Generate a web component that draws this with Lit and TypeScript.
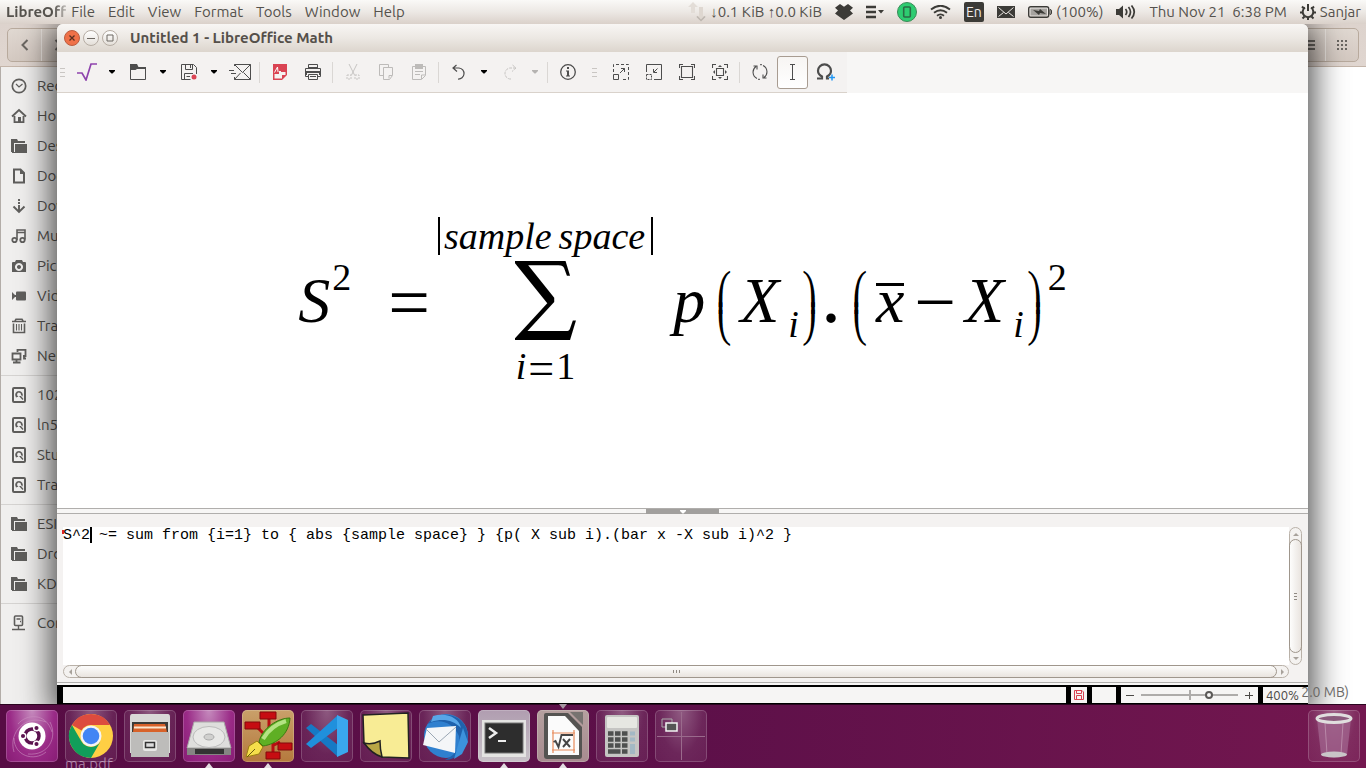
import { LitElement, html, css, svg, nothing, TemplateResult } from "lit";
import { customElement, property } from "lit/decorators.js";

type Art = { w: number; h: number; body: unknown };

const dark = "#3c3b37";
const disk = svg`<path fill="none" stroke="#5f5e5c" stroke-width="2" d="M3 1h10a1 1 0 0 1 1 1v12a1 1 0 0 1-1 1h-10a1 1 0 0 1-1-1v-12a1 1 0 0 1 1-1z"/><path fill="#5f5e5c" d="M8 4a4 4 0 0 0-3 6.500l2.500-1A2 2 0 1 1 10 8l1.500 1.500A4 4 0 0 0 8 4zM8 9h2l2.500 3-1 1z"/>`;
const folder = svg`<path fill="#5f5e5c" d="M0 1h6l1 2h7v2H3v9H0z"/><path fill="#5f5e5c" d="M4 6h12v9H1v-1h3z"/>`;

const ICONS: Record<string, Art> = {
  /* places */
  clock: { w: 16, h: 16, body: svg`<circle cx="8" cy="8" r="6.700" fill="none" stroke="#5f5e5c" stroke-width="1.700"/><path d="M5 6l3 3 3.500-3" fill="none" stroke="#5f5e5c" stroke-width="1.200"/>` },
  home: { w: 16, h: 16, body: svg`<path d="M1 8.500L8 2l7 6.500M3.500 8v6.200h9V8" fill="none" stroke="#5f5e5c" stroke-width="1.800"/><path fill="#5f5e5c" d="M7 9h3v5H7z"/>` },
  folder: { w: 16, h: 16, body: folder },
  doc: { w: 16, h: 16, body: svg`<path d="M3 1.500h6.500L13 5v9.500H3z" fill="none" stroke="#5f5e5c" stroke-width="2"/><path fill="#5f5e5c" d="M9 1v5h5z"/>` },
  down: { w: 16, h: 16, body: svg`<path d="M8 1v2M8 4v2M8 7v6M2.500 8.500L8 14l5.500-5.500" fill="none" stroke="#5f5e5c" stroke-width="1.900"/>` },
  music: { w: 16, h: 16, body: svg`<path d="M6 12V2h8v9.500M6 4.500h8" fill="none" stroke="#5f5e5c" stroke-width="1.600"/><circle cx="3.500" cy="12" r="2.200" fill="none" stroke="#5f5e5c" stroke-width="1.800"/><circle cx="11.500" cy="12" r="2.200" fill="none" stroke="#5f5e5c" stroke-width="1.800"/>` },
  camera: { w: 16, h: 16, body: svg`<path fill="#5f5e5c" fill-rule="evenodd" d="M1 5q0-1 1-1h2l1-2h6l1 2h2q1 0 1 1v9H1zM8 5a4 4 0 1 0 .01 0zM8 7a2 2 0 1 1-.01 0z"/>` },
  video: { w: 16, h: 16, body: svg`<rect x="5" y="3.500" width="10" height="9" rx="1" fill="#5f5e5c"/><path fill="#5f5e5c" d="M1 4l3 3h1v2H4l-3 3z"/>` },
  trash: { w: 16, h: 16, body: svg`<path d="M1 3.500h14M4 3l1-1.800h6L12 3M2.500 5.500v9h11v-9" fill="none" stroke="#5f5e5c" stroke-width="1.600"/><path d="M5.500 6v6.500M8 6v6.500M10.500 6v6.500" stroke="#5f5e5c" stroke-width="1.100"/>` },
  network: { w: 16, h: 16, body: svg`<path d="M6.500 4V1.800h8V8H12M13 8v2.500h2M1.500 5.500h8v6h-8zM5.500 12v3M2 14.500h7.500" fill="none" stroke="#5f5e5c" stroke-width="1.800"/>` },
  disk: { w: 16, h: 16, body: disk },
  server: { w: 16, h: 16, body: svg`<rect x="3.500" y="1" width="8" height="9.500" rx="1" fill="none" stroke="#5f5e5c" stroke-width="1.600"/><path d="M5.500 4h4M7.500 11v3M1 14.500h13M9 6.500h1" stroke="#5f5e5c" stroke-width="1.400"/>` },
  back: { w: 8, h: 14, body: svg`<path d="M6.500 2L1.500 7l5 5" fill="none" stroke="#6b6762" stroke-width="2"/>` },
  next: { w: 8, h: 14, body: svg`<path d="M1.500 2l5 5-5 5" fill="none" stroke="#6b6762" stroke-width="2"/>` },
  list: { w: 12, h: 12, body: svg`<path d="M0 2h12M0 6h12M0 10h12" stroke="#6b6762" stroke-width="2"/>` },
  grid: { w: 12, h: 12, body: svg`<path d="M1 2h10M1 6h10M1 10h10" stroke="#6b6762" stroke-width="2" stroke-dasharray="2"/>` },
  /* indicators */
  updown: { w: 18, h: 20, body: svg`<path d="M5 0l5 5H7v6H3V5H0z" fill="#e3ddd7"/><path d="M11 5h4v9h3l-5 5-5-5h3z" fill="#ded7d0"/><path d="M9 14.500l4 4 4-4" fill="none" stroke="#bdb7b0" stroke-width="1.500"/>` },
  dropbox: { w: 18, h: 16, body: svg`<path fill="${dark}" d="M5 0l4 2.700L13 0l5 3.700-3 2.800 3 3-3 2.200-6 4.300-6-4.300L0 9.500l3-3L0 3.700z"/>` },
  bars: { w: 18, h: 14, body: svg`<path d="M0 2h10M0 7h10M0 12h10" stroke="${dark}" stroke-width="2.600"/><path fill="${dark}" d="M12 5h6l-3 3.500z"/>` },
  phone: { w: 20, h: 20, body: svg`<circle cx="10" cy="10" r="9.500" fill="#2ecc71" stroke="#3a8b58"/><rect x="6.700" y="5" width="6.600" height="10" rx="1" fill="none" stroke="#2b6a45" stroke-width="1.600"/>` },
  wifi: { w: 21, h: 14, body: svg`<path d="M1 4.500q9.500-7.500 19 0M4 7.700q6.500-5 13 0M7 10.700q3.500-2.600 7 0" fill="none" stroke="${dark}" stroke-width="1.900"/><circle cx="10.500" cy="12.500" r="1.500" fill="${dark}"/>` },
  envelope: { w: 18, h: 12, body: svg`<rect width="18" height="12" fill="${dark}"/><path d="M1.500 1.500L9 8l7.500-6.500M1.500 10.500l5-4M16.500 10.500l-5-4" fill="none" stroke="#eeeae6"/>` },
  battery: { w: 24, h: 12, body: svg`<rect x=".7" y=".7" width="20" height="10.600" rx="2" fill="none" stroke="${dark}" stroke-width="1.400"/><rect x="2.500" y="2.500" width="16.500" height="7" fill="#a6a39f"/><path d="M22 3.500q1.500 0 1.500 1.500v2q0 1.500-1.500 1.500z" fill="none" stroke="${dark}"/><path fill="${dark}" d="M5 4l6 1 1-2 6 5-6-1-1 2z"/>` },
  volume: { w: 20, h: 14, body: svg`<path fill="${dark}" d="M0 4h3l4-3.500v13L3 10H0z"/><path d="M9.500 4q2.500 3 0 6M12.500 2q4 5 0 10M15.500.5q5.500 6.500 0 13" fill="none" stroke="${dark}" stroke-width="1.700"/>` },
  gear: { w: 16, h: 16, body: svg`<path d="M5 3.500a5.300 5.300 0 1 0 6 0" fill="none" stroke="${dark}" stroke-width="2"/><path d="M8 0v7M0 8.500h3M13 8.500h3M2 2.500l2 2M14 2.500l-2 2M2.500 14.500l2-2M13.500 14.500l-2-2M8 13v3" stroke="${dark}" stroke-width="2"/>` },
  /* toolbar */
  sqrt: { w: 20, h: 18, body: svg`<path d="M0 10h5l4 7L14 1h6" fill="none" stroke="#8e44ad" stroke-width="1.700"/>` },
  open: { w: 16, h: 16, body: svg`<path d="M.5 4v11.500h15V4z" fill="none" stroke="#4d4d4d"/><path fill="#4d4d4d" d="M0 0h7l1.500 3H16v2H7L5.500 6H0z"/>` },
  save: { w: 16, h: 16, body: svg`<path d="M9.500 15.500h-9V.5h12l3 3V10M4.500.5v5h7v-5M3.500 15V9.500H12M5.500 12.500H9" fill="none" stroke="#4d4d4d"/><path d="M9.500 1v3" stroke="#4d4d4d"/><circle cx="13" cy="13" r="2.500" fill="#da4453"/>` },
  mail: { w: 22, h: 16, body: svg`<path d="M5.500 2V.5h16v15h-16V13M5.500.5l8 8 8-8M21.500 15.500l-7-7M5.500 15.500l6-6.500M0 6.500h5M2 9.500h5" fill="none" stroke="#4d4d4d"/>` },
  pdf: { w: 14, h: 16, body: svg`<path d="M0 0h14v11l-5 5H0z" fill="#da4453"/><path d="M6 7h2v1h4.500v3H9v3.500H1.500V10H6z" fill="#f4f2f1"/><path d="M1.500 8.500l3-5.500.5 5" fill="none" stroke="#fff"/>` },
  print: { w: 16, h: 16, body: svg`<path d="M3.500 4V.5h9V4M3.500 12.500h-3v-8h15v8h-3M3.500 10.500h9v5h-9z" fill="none" stroke="#4d4d4d"/><path fill="#4d4d4d" d="M1 7h14v4h-1V9H2v2H1zM3 3h10v1H3zM5 12h6v1H5z"/>` },
  cut: { w: 14, h: 16, body: svg`<path d="M3 0l5.500 11M11 0L5.500 11" fill="none" stroke="#c6c4c2"/><path d="M1 11h4v4H1zM9 11h4v4H9z" fill="none" stroke="#c6c4c2" stroke-dasharray="2 1"/>` },
  copy: { w: 14, h: 16, body: svg`<path d="M4 11.500H.5V.5h9V3M4.500 3.500h9v8l-3 4h-6zM13 11.500h-3v3" fill="none" stroke="#bdbbb9"/>` },
  paste: { w: 14, h: 16, body: svg`<path d="M.5 2.500h13v9l-4 4h-9zM9.500 15v-4H13" fill="none" stroke="#bdbbb9"/><path fill="#bdbbb9" d="M3 0h8v5H3zM3 7h8v1H3zM3 10h5v1H3z"/>` },
  undo: { w: 14, h: 16, body: svg`<path d="M4.500 1L1 4l4 3.500M1 4h6a5.500 5.500 0 1 1-1 11" fill="none" stroke="#4d4d4d" stroke-width="1.200"/>` },
  redo: { w: 14, h: 16, body: svg`<path d="M9.500 1L13 4 9 7.500M13 4H7a5.500 5.500 0 1 0 1 11" fill="none" stroke="#c6c4c2" stroke-dasharray="3 1"/>` },
  info: { w: 16, h: 16, body: svg`<circle cx="8" cy="8" r="7.300" fill="none" stroke="#4d4d4d" stroke-width="1.300"/><path fill="#4d4d4d" d="M7 3h2v2H7zM6 6.500h3v5h1v1H6v-1h1v-4H6z"/>` },
  zoomin: { w: 16, h: 16, body: svg`<path d="M.5 8V.5h15v15H8" fill="none" stroke="#4d4d4d" stroke-dasharray="3 2"/><path d="M.5 10.500h5v5h-5zM7 9l4.500-4.500M8 4.500h3.500V8" fill="none" stroke="#4d4d4d"/>` },
  zoomout: { w: 16, h: 16, body: svg`<path d="M.5 8V.5h15v15H8M11.500 4.500L8 8M7.500 5v3.500H11" fill="none" stroke="#4d4d4d"/><path d="M.5 10.500h5v5h-5z" fill="none" stroke="#4d4d4d" stroke-dasharray="2 1"/>` },
  zoom100: { w: 16, h: 16, body: svg`<path d="M2.500 2.500h11v11h-11zM.5 4V.5H4M12 .5h3.500V4M15.500 12v3.500H12M4 15.500H.5V12" fill="none" stroke="#4d4d4d" stroke-width="1.100"/>` },
  zoomfit: { w: 16, h: 16, body: svg`<path d="M4.500 4.500h7v7h-7zM.5 4V.5H4M12 .5h3.500V4M15.500 12v3.500H12M4 15.500H.5V12" fill="none" stroke="#4d4d4d" stroke-width="1.100"/><path fill="#4d4d4d" d="M6 3l2-2 2 2zM6 13l2 2 2-2zM3 6L1 8l2 2zM13 6l2 2-2 2z"/>` },
  refresh: { w: 16, h: 16, body: svg`<path d="M5 14.500A7 7 0 0 1 4 2.500M11 1.500a7 7 0 0 1 1 12M1.500 2H5v3.500M14.500 14H11v-3.500" fill="none" stroke="#4d4d4d" stroke-width="1.100"/><path d="M8 .7h2M6 15.300h2" stroke="#4d4d4d"/>` },
  ibeam: { w: 16, h: 16, body: svg`<path d="M5 .5h5M5 15.500h5M7.500.5v15" stroke="#4d4d4d"/>` },
  omega: { w: 20, h: 18, body: svg`<path d="M1 15.500h5v-2C3 12 2 10 2 7.800a6 6 0 0 1 13 0c0 2.200-1 4.200-4 5.700v2h2" fill="none" stroke="#4d4d4d" stroke-width="2.200"/><path d="M13 14.500h6M16 11.500v6" stroke="#2196f3" stroke-width="1.500"/>` },
  caret: { w: 6, h: 4, body: svg`<path d="M0 0h6v1L3.500 3.500h-1L0 1z" fill="currentColor"/>` },
  redsave: { w: 10, h: 10, body: svg`<path d="M.5.5h7.500l1.500 1.500v7.500h-9zM2.500.5v3h5v-3M2.500 9.500v-4h5v4" fill="none" stroke="#da4453"/>` },
  /* launcher */
  ubuntu: { w: 52, h: 52, body: svg`<path d="M8 42C2 22 20 4 40 12M44 12c8 16-2 34-22 32M12 14C20 4 40 2 46 22M40 42C28 52 8 46 8 28" fill="none" stroke="#c98fc0" opacity=".6"/><circle cx="26" cy="26" r="13.500" fill="#fff"/><circle cx="26" cy="26" r="7" fill="none" stroke="#5c1450" stroke-width="3.500"/><g fill="#5c1450" stroke="#fff" stroke-width="1.500"><circle cx="17" cy="26" r="2.800"/><circle cx="30.500" cy="18" r="2.800"/><circle cx="30.500" cy="34" r="2.800"/></g>` },
  chrome: { w: 52, h: 52, body: svg`<circle cx="26" cy="26" r="22" fill="#ffcf44"/><path d="M6.900 15A22 22 0 0 1 45.100 15H26a11 11 0 0 0-9.500 5.500z" fill="#dd4b3e"/><path d="M6.900 15A22 22 0 0 0 26 48l9.500-16.500a11 11 0 0 1-19 0z" fill="#119e5a"/><circle cx="26" cy="26" r="10.500" fill="#f4f4f4"/><circle cx="26" cy="26" r="8.300" fill="#4285f4"/>` },
  files: { w: 52, h: 52, body: svg`<path d="M6 7q0-3 2-3h36q2 0 2 3v36H6z" fill="#d9d9d7"/><path d="M8 12h36v11H8z" fill="#3c3b37"/><path d="M10 14h31l2 8H9z" fill="#d8622a"/><path d="M10 16.500h32v2H10z" fill="#fbe6cf"/><path d="M7 22h38v25H7z" fill="#bdbcba"/><rect x="19" y="30" width="14" height="11" rx="2" fill="#e8e8e6"/><rect x="21.500" y="32.500" width="9" height="5" fill="#ddd" stroke="#333" stroke-width="1.500"/>` },
  drive: { w: 52, h: 52, body: svg`<path d="M11 12h30l7 26H4z" fill="#dededc" stroke="#a9a9a7"/><ellipse cx="26" cy="27" rx="16" ry="10.500" fill="#e8e8e6" stroke="#bbb"/><ellipse cx="26" cy="27" rx="5" ry="3" fill="#d0d0ce" stroke="#aaa"/><path d="M4 38h44v7H4z" fill="#858583"/><path d="M12 39h29v5H12z" fill="#333"/>` },
  pen: { w: 52, h: 52, body: svg`<path d="M16 18l8 8M27 8v12M38 32l-8 4M31 44V32" stroke="#b80d12" stroke-width="3"/><g fill="#c60d12" stroke="#830a0c"><path d="M3 12h15v7H3zM18 2h16v7H18zM36 33h14v7H36zM24 42h14v7H24z"/></g><path d="M48 8C36 8 20 18 17 32l4 4c14-2 26-12 27-28z" fill="#5faf24" stroke="#3a7a11"/><path d="M44 11C34 14 26 20 21 29" stroke="#b4e383" stroke-width="4" fill="none"/><path d="M15 31l6 6-4 7-13 3 3-11z" fill="#f6df4b" stroke="#9b7f12"/><path d="M5 47l8-8" stroke="#6b5a10"/>` },
  vscode: { w: 52, h: 52, body: svg`<path d="M5 18l5-4 27 21v12z" fill="#1679c4"/><path d="M5 34l5 4 27-20V5z" fill="#2090dc"/><path d="M36 5l11 5v32l-11 5z" fill="#3aa7ee"/>` },
  note: { w: 52, h: 52, body: svg`<path d="M3 5l45-2 1 45-27-1-18-14z" fill="#f8ec95" stroke="#222" stroke-width="1.500"/><path d="M4 33q8 2 16-2 0 8 2 16Q12 44 4 33z" fill="#b9a645" stroke="#222" stroke-width="1.500"/>` },
  bird: { w: 52, h: 52, body: svg`<circle cx="27" cy="26" r="22" fill="#2f80cf"/><path d="M9 14C18 0 42 2 48 20c4 18-10 30-22 30 12-6 16-14 14-24C34 12 20 8 9 14z" fill="#1f62ad"/><path d="M14 6c14-4 26 2 28 12-8-8-18-10-30-6z" fill="#58a6e8"/><path d="M8 18l29-2-1 27-32-8z" fill="#f4f6f8"/><path d="M7 19l13 13 17-15" fill="none" stroke="#9aa7b4"/><path d="M44 18l5 14-6 12-8 5z" fill="#3c92dc"/>` },
  terminal: { w: 52, h: 52, body: svg`<rect x="4" y="10" width="44" height="37" fill="#e4e4e2"/><rect x="7" y="13" width="38" height="30" fill="#2d2d2d" stroke="#777"/><path d="M11 18l7 5-7 5" fill="none" stroke="#eee" stroke-width="2.500"/><path d="M20 31h8" stroke="#eee" stroke-width="2"/>` },
  math: { w: 52, h: 52, body: svg`<path d="M9 3h22l14 14v29q0 3-3 3H10q-3 0-3-3V5q0-2 2-2z" fill="#555452"/><path d="M11 6h17l14 15v24H11z" fill="#fbfbfb"/><path d="M33 2h13v13z" fill="#777370"/><path d="M15 23h23M15 40h23M16 20v23M37 20v23" stroke="#e88a5a" stroke-width="1.200"/><path d="M16.500 32l2-1 3 6 3-12H36M26 29l7 8M33 29l-7 8" fill="none" stroke="#444" stroke-width="1.900"/>` },
  calc: { w: 52, h: 52, body: svg`<rect x="9" y="5" width="34" height="42" rx="2" fill="#c5c5c3"/><rect x="11" y="7" width="30" height="11" rx="1" fill="#e6e7e2"/><path d="M12 23.500h21M12 29.500h21M12 35.500h21" stroke="#4e504f" stroke-width="4.500" stroke-dasharray="5.500 1.500"/><path d="M12 41.500h12.500M26 41.500h5.500" stroke="#4e504f" stroke-width="4.500"/><path d="M34 21.500h5v4h-5zM34 27.500h5v4h-5zM34 34h5v10h-5z" fill="#a3b8c4"/>` },
  desks: { w: 52, h: 52, body: svg`<path d="M26.500 2v48M2 26.500h48" stroke="#9a6a8c"/><path d="M7 9h10v8H7z" fill="none" stroke="#aaa"/><path d="M11 13h11v8H11z" fill="#555" stroke="#f4f4f4" stroke-width="1.500"/>` },
  bin: { w: 52, h: 52, body: svg`<path d="M9 9h34l-4 36q-13 5-26 0z" fill="#a2668f" opacity=".75"/><path d="M17 13l2 31M35 13l-2 31" stroke="#b988a8"/><ellipse cx="26" cy="44.500" rx="13" ry="3" fill="#c9c5c8"/><ellipse cx="26" cy="8.500" rx="17" ry="4" fill="#8b5a7c" stroke="#e0dede" stroke-width="3"/>` },
};

const icon = (name: string): TemplateResult => {
  const a = ICONS[name];
  return html`<svg width=${a.w} height=${a.h} viewBox="0 0 ${a.w} ${a.h}" aria-hidden="true">${a.body}</svg>`;
};

const base = css`
  * { box-sizing: border-box; }
  button { font: inherit; color: inherit; background: none; border: 0; padding: 0; margin: 0; }
  svg { display: block; flex: none; }
`;

@customElement("top-panel")
class TopPanel extends LitElement {
  static styles = [base, css`
    :host { display: flex; align-items: center; justify-content: space-between; height: 24px; padding: 0 5px 0 6px;
      background: linear-gradient(#faf9f7, #ece8e4 50%, #dad1ca); color: #55524d; white-space: nowrap; }
    .menus, .tray { display: flex; align-items: center; gap: 13px; }
    .app { margin-right: -8px; font-weight: 700; mask-image: linear-gradient(90deg, #000 80%, #0004); }
    .net, .group { display: flex; align-items: center; gap: 4px; }
    .lang { width: 20px; height: 20px; border-radius: 2px; background: #3c3b37; color: #f2efec; line-height: 20px; text-align: center; font-size: 14px; }
  `];
  render() {
    return html`
      <nav class="menus">
        <span class="app">LibreOff</span>
        ${["File", "Edit", "View", "Format", "Tools", "Window", "Help"].map((m) => html`<button>${m}</button>`)}
      </nav>
      <div class="tray">
        <span class="net">${icon("updown")}<span>↓0.1 KiB ↑0.0 KiB</span></span>
        ${["dropbox", "bars", "phone", "wifi"].map(icon)}
        <span class="lang">En</span>
        ${icon("envelope")}
        <span class="group">${icon("battery")}<span>(100%)</span></span>
        ${icon("volume")}
        <span>Thu Nov 21&nbsp; 6:38 PM</span>
        <span class="group">${icon("gear")}<span>Sanjar</span></span>
      </div>`;
  }
}

const PLACES: [string, string][][] = [
  [["clock", "Recent"], ["home", "Home"], ["folder", "Desktop"], ["doc", "Documents"], ["down", "Downloads"],
   ["music", "Music"], ["camera", "Pictures"], ["video", "Videos"], ["trash", "Trash"], ["network", "Network"]],
  [["disk", "102 GB Volume"], ["disk", "ln5"], ["disk", "Studies"], ["disk", "Travel"]],
  [["folder", "ESI"], ["folder", "Dropbox"], ["folder", "KDE"]],
  [["server", "Connect to Server"]],
];

@customElement("file-manager")
class FileManager extends LitElement {
  static styles = [base, css`
    :host { display: flex; flex-direction: column; height: 100%; background: #fff; color: #55524d; }
    .bar { display: flex; justify-content: space-between; align-items: flex-start; height: 43px; padding: 4px 7px;
      background: linear-gradient(#ddd3cd, #e0d6d0); border-bottom: 1px solid #c4b5a9; }
    .pair { display: flex; height: 34px; border: 1px solid #b8aa9d; border-radius: 5px; background: linear-gradient(#e0d8d1, #d4c9c1); }
    .pair button { display: grid; place-items: center; width: 33px; }
    .pair button + button { border-left: 1px solid #efe9e4; }
    .side { flex: 1; width: 180px; padding-top: 4px; background: #f0efee; border-left: 1px solid #b3ada8; }
    .place { display: flex; align-items: center; gap: 10px; height: 30px; padding-left: 10px; white-space: nowrap; color: inherit; text-decoration: none; }
    .group + .group { margin-top: 4px; padding-top: 4px; border-top: 1px solid #d5d3d1; }
  `];
  render() {
    return html`
      <div class="bar">
        <div class="pair"><button aria-label="Back">${icon("back")}</button><button aria-label="Forward">${icon("next")}</button></div>
        <div class="pair"><button aria-label="List view">${icon("list")}</button><button aria-label="Icon view">${icon("grid")}</button></div>
      </div>
      <nav class="side">
        ${PLACES.map((g) => html`<div class="group">${g.map(([i, t]) => html`<a class="place" href="#">${icon(i)}<span>${t}</span></a>`)}</div>`)}
      </nav>`;
  }
}

/* Toolbar entries: "|" separator, ":" handle, trailing "+" drop-down, leading "-" disabled, leading "*" pressed. */
const TOOLS = ":,sqrt+,open+,save+,mail,|,pdf,print,|,-cut,-copy,-paste,|,undo+,-redo+,|,info,:,zoomin,zoomout,zoom100,zoomfit,|,refresh,*ibeam,omega".split(",");

@customElement("math-toolbar")
class MathToolbar extends LitElement {
  static styles = [base, css`
    :host { display: flex; height: 41px; }
    .bar { display: flex; align-items: center; padding-right: 5px; background: #f4f2f1; border-bottom: 1px solid #d9d2cb; }
    .tool { display: grid; place-items: center; width: 33px; height: 33px; }
    .tool.on { width: 31px; margin: 0 1px; border: 1px solid #a89c91; border-radius: 3px; background: linear-gradient(#f7f5f3, #fff); }
    .drop { display: grid; place-items: center; width: 18px; height: 33px; color: #000; }
    .drop:disabled { color: #b5b3b1; }
    .sep { width: 1px; height: 21px; margin: 0 3px; background: #dad7d4; }
    .grip { width: 5px; height: 9px; margin: 0 7px 0 8px; background: repeating-linear-gradient(#c9c6c3 0 1px, transparent 1px 4px); }
    .grip:first-child { margin: 0 5px 0 3px; }
  `];
  render() {
    return html`<div class="bar">${TOOLS.map((t) => {
      if (t === "|") return html`<span class="sep"></span>`;
      if (t === ":") return html`<span class="grip"></span>`;
      const off = t[0] === "-";
      const name = t.replace(/[-+*]/g, "");
      return html`<button class="tool ${t[0] === "*" ? "on" : ""}" aria-label=${name} ?disabled=${off}>${icon(name)}</button>
        ${t.endsWith("+") ? html`<button class="drop" aria-label="${name} options" ?disabled=${off}>${icon("caret")}</button>` : nothing}`;
    })}</div>`;
  }
}

const fence = (mark: string, kind = "open") =>
  html`<math class="fence ${kind}"><mrow><mo stretchy="true" symmetric="false" lspace="0px" rspace="0px" minsize="60px">${mark}</mo><mspace width="0px" height="52px" depth="14px"></mspace></mrow></math>`;

@customElement("math-formula")
class MathFormula extends LitElement {
  static styles = css`
    :host { display: block; font: 64px/71px "Liberation Serif", serif; color: #000; white-space: nowrap; }
    span { display: inline-block; }
    .it { font-style: italic; }
    .sm { font-size: 38px; line-height: 42px; }
    .sup { vertical-align: 32px; margin-left: 2px; }
    .sub { vertical-align: -15px; margin-left: 9px; }
    .op { font-size: 74px; vertical-align: -5px; }
    .rel { margin: 0 8px 0 37px; }
    .sum { display: inline-flex; flex-direction: column; align-items: center; vertical-align: 73px; margin-right: 20px; }
    .abs { display: flex; gap: 7px; padding: 0 6px 0 4px; border: solid #000; border-width: 0 2px; line-height: 38px; }
    .sigma { font-family: "DejaVu Math TeX Gyre", "Liberation Serif", serif; font-size: 75px; line-height: 90px; }
    .low { height: 42px; }
    .low .op { font-size: 46px; line-height: 42px; margin: 0 2px; }
    .fence { font-family: "DejaVu Math TeX Gyre", "Liberation Serif", serif; font-size: 28px; }
    .open { margin: 0 11px 0 7px; }
    .close { margin: 0 4px 0 1px; }
    .dot { font-size: 80px; }
    .bar { border-top: 3px solid #000; line-height: 29px; }
    .minus { margin: 0 9px 0 10px; }
  `;
  render() {
    return html`<span class="it">S</span><span class="sm sup">2</span><span class="op rel">=</span><span class="sum"><span class="abs sm it"><span>sample</span><span>space</span></span><span class="sigma">∑</span><span class="low sm"><span class="it">i</span><span class="op">=</span><span>1</span></span></span><span class="it">p</span>${fence("(")}<span class="it">X</span><span class="sm sub it">i</span>${fence(")", "close")}<span class="dot">.</span>${fence("(")}<span class="it bar">x</span><span class="op minus">−</span><span class="it">X</span><span class="sm sub it">i</span>${fence(")", "close")}<span class="sm sup">2</span>`;
  }
}

@customElement("math-window")
class MathWindow extends LitElement {
  static styles = [base, css`
    :host { display: flex; flex-direction: column; background: #f7f6f5; border-radius: 6px 6px 0 0; color: #4c4a47; overflow: hidden; }
    .title { display: flex; align-items: center; gap: 3px; height: 28px; padding: 0 7px; background: linear-gradient(#f8f6f4, #ece8e3 50%, #dcd5cd); }
    .title h1 { margin: 0 0 0 9px; font-size: 15px; font-weight: 700; color: #55504a; }
    .ctl { display: grid; place-items: center; width: 16px; height: 16px; border: 1px solid #b5aca3; border-radius: 50%; background: linear-gradient(#fff, #e4dfd9); }
    .close { background: #ef7148; border-color: #bb5c3f; }
    .canvas { flex: 1; min-height: 0; display: grid; place-items: center; padding-top: 2px; background: #fff; }
    .split { display: flex; justify-content: center; height: 6px; border: solid #b0aeac; border-width: 1px 0; background: #f7f6f5; }
    .grab { display: grid; place-items: center; width: 73px; height: 6px; background: #a19f9d; color: #fff; }
    .editor { display: grid; grid-template-columns: 1fr 13px; grid-template-rows: 138px 13px; padding: 13px 6px 4px; background: #f4f2f1; border-bottom: 1px solid #b0aeac; }
    .field { position: relative; display: flex; background: #fff; }
    .code { flex: 1; display: block; padding: 0; margin: 0; border: 0; outline: 0; resize: none; overflow: hidden; background: none; color: #000; font: 15px/17px "Liberation Mono", monospace; }
    .cursor { position: absolute; left: 27px; top: 0; width: 2px; height: 16px; background: #000; }
    .mark { position: absolute; left: -1px; top: 3px; width: 2px; height: 4px; background: #d22; }
    .scroll { display: flex; align-items: center; border: 1px solid #b9b1a8; border-radius: 7px; background: #f4f2f0; }
    .scroll.v { flex-direction: column; }
    .thumb { flex: 1; display: grid; place-items: center; border: 1px solid #9f968c; border-radius: 7px; }
    .v .thumb { width: 13px; background: linear-gradient(90deg, #fdfdfc, #e9e4df); }
    .h .thumb { height: 13px; background: linear-gradient(#fdfdfc, #e9e4df); }
    .ridge { width: 3px; height: 7px; background: repeating-linear-gradient(#8f8982 0 1px, transparent 1px 3px); }
    .h .ridge { width: 7px; height: 3px; background: repeating-linear-gradient(90deg, #8f8982 0 1px, transparent 1px 3px); }
    .arrow { display: grid; place-items: center; width: 11px; height: 11px; color: #a8a29b; }
    .status { display: flex; gap: 5px; height: 19px; padding: 2px 0 1px 6px; margin-top: 2px; background: #000; }
    .cell { display: flex; align-items: center; justify-content: center; background: #f6f5f4; }
    .cell.doc { flex: 1; border-right: 0; }
    .cell.sig { width: 16px; }
    .cell.mod { width: 24px; }
    .cell.zoom { width: 137px; gap: 7px; }
    .cell.pct { width: 45px; padding-right: 6px; font-size: 13px; }
    .slider { appearance: none; width: 97px; height: 13px; margin: 0; background: linear-gradient(#aeacaa, #aeacaa) center / 100% 2px no-repeat, linear-gradient(#aeacaa, #aeacaa) center / 2px 10px no-repeat; }
    .slider::-webkit-slider-thumb { appearance: none; width: 8px; height: 8px; border: 2px solid #5b5957; border-radius: 50%; background: #f6f5f4; }
  `];
  arrow(d: string) {
    return html`<button class="arrow" aria-label="Scroll"><svg width="6" height="6" viewBox="0 0 6 6"><path d=${d} fill="currentColor" /></svg></button>`;
  }
  render() {
    return html`
      <header class="title">
        <button class="ctl close" aria-label="Close"><svg width="8" height="8" viewBox="0 0 8 8"><path d="M1.500 1.500l5 5M6.500 1.500l-5 5" stroke="#5a2f20" stroke-width="1.300" /></svg></button>
        <button class="ctl" aria-label="Minimize"><svg width="8" height="8" viewBox="0 0 8 8"><path d="M0 4.500h8" stroke="#6d6862" /></svg></button>
        <button class="ctl" aria-label="Maximize"><svg width="8" height="8" viewBox="0 0 8 8"><path d="M1 1h6v6H1z" fill="none" stroke="#6d6862" /></svg></button>
        <h1>Untitled 1 - LibreOffice Math</h1>
      </header>
      <math-toolbar></math-toolbar>
      <main class="canvas"><math-formula></math-formula></main>
      <div class="split"><span class="grab">${icon("caret")}</span></div>
      <section class="editor">
        <div class="field">
          <textarea class="code" aria-label="Commands" spellcheck="false" .value=${"S^2 ~= sum from {i=1} to { abs {sample space} } {p( X sub i).(bar x -X sub i)^2 }"}></textarea>
          <span class="mark"></span><span class="cursor"></span>
        </div>
        <div class="scroll v">${this.arrow("M0 5l3-3 3 3z")}<span class="thumb"><span class="ridge"></span></span>${this.arrow("M0 1h6L3 4z")}</div>
        <div class="scroll h">${this.arrow("M5 0v6L2 3z")}<span class="thumb"><span class="ridge"></span></span>${this.arrow("M1 0v6l3-3z")}</div>
      </section>
      <footer class="status">
        <span class="cell doc"></span>
        <span class="cell sig">${icon("redsave")}</span>
        <span class="cell mod"></span>
        <span class="cell zoom">
          <svg width="8" height="8" viewBox="0 0 8 8"><path d="M0 4.500h8" stroke="#4c4a47" /></svg>
          <input class="slider" type="range" aria-label="Zoom" min="0" max="100" value="72" />
          <svg width="8" height="8" viewBox="0 0 8 8"><path d="M0 4.500h8M4.500 1v7" stroke="#4c4a47" /></svg>
        </span>
        <span class="cell pct">400%</span>
      </footer>`;
  }
}

const APPS: [string, string][] = [
  ["ubuntu", "violet"], ["chrome", ""], ["files", ""], ["drive", "violet run"], ["pen", "tan run"], ["vscode", ""], ["note", ""],
  ["bird", ""], ["terminal", "grey run"], ["math", "rose run focus"], ["calc", ""], ["desks", ""],
];

@customElement("app-dock")
class AppDock extends LitElement {
  static styles = [base, css`
    :host { position: relative; display: flex; justify-content: space-between; height: 64px; padding: 6px;
      background: linear-gradient(90deg, #570c44, #5d1049 50%, #73174f); box-shadow: inset 0 1px #2b0520; }
    .apps { display: flex; gap: 7px; }
    .tile { position: relative; width: 52px; height: 52px; border-radius: 5px; box-shadow: inset 0 0 0 1px #ffffff30;
      background: radial-gradient(ellipse at 50% 0, #ffffff50, #ffffff18 60%, #ffffff10); }
    .violet { background: radial-gradient(ellipse at 50% 0, #c58abd, #9a2b87 60%, #871c74); }
    .tan { background: linear-gradient(#c9a06a, #b5793d); }
    .grey { background: linear-gradient(#b09db0, #c8c2c8); }
    .rose { background: linear-gradient(#b5a09f, #a88c90); }
    .run::after, .focus::before { content: ""; position: absolute; left: 22px; border: 4px solid transparent; }
    .run::after { bottom: -6px; border-top: 0; border-bottom: 5px solid #e3dde1; }
    .focus::before { top: -6px; border-bottom: 0; border-top: 5px solid #a797a2; }
    .ghost { position: absolute; left: 65px; top: 52px; color: #a678a0; line-height: 16px; }
  `];
  render() {
    return html`
      <span class="ghost">ma.pdf</span>
      <nav class="apps">${APPS.map(([n, c]) => html`<button class="tile ${c}" aria-label=${n}>${icon(n)}</button>`)}</nav>
      <button class="tile" aria-label="Trash">${icon("bin")}</button>`;
  }
}

@customElement("app-root")
class AppRoot extends LitElement {
  @property() label = "2.0 MB)";
  static styles = css`
    :host { display: grid; grid-template-rows: 24px minmax(0, 1fr) 64px; height: 100vh; overflow: hidden;
      font: 15px/20px Ubuntu, "Noto Sans", "Open Sans", sans-serif; background: #570c44; }
    .desk { position: relative; overflow: hidden; }
    .front { position: absolute; inset: 0 58px 0 57px; box-shadow: 0 6px 32px 6px #000000b0; }
    .size { position: absolute; right: 17px; bottom: 2px; font-size: 14px; color: #6b6966; }
  `;
  render() {
    return html`
      <top-panel></top-panel>
      <div class="desk">
        <file-manager></file-manager>
        <math-window class="front"></math-window>
        <span class="size">${this.label}</span>
      </div>
      <app-dock></app-dock>`;
  }
}
